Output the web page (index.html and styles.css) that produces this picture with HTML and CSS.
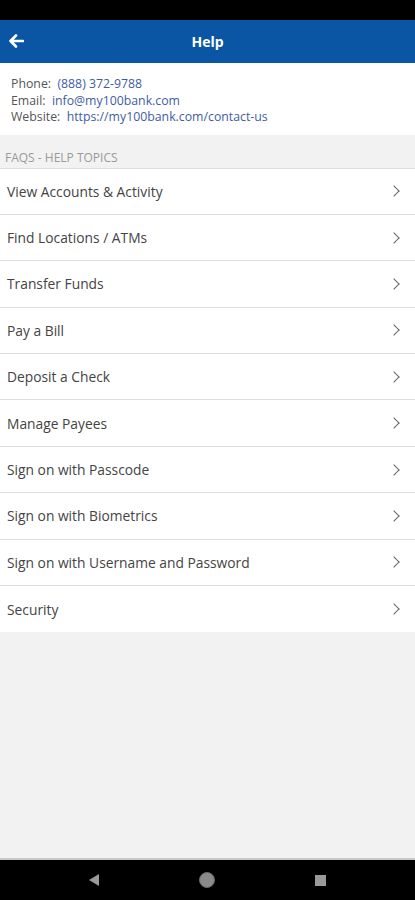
FILE: index.html
```html
<!DOCTYPE html>
<html lang="en">
<head>
    <meta charset="UTF-8">
    <meta name="viewport" content="width=device-width, initial-scale=1.0">
    <title>Help</title>
    <link rel="stylesheet" href="styles.css">
</head>
<body>

<div class="screen">
    <div class="status-bar"></div>

    <div class="app-bar">
        <span class="back">
            <svg width="16" height="14" viewBox="0 0 16 14">
                <path d="M15 7H2.5M8 1.5L2.5 7L8 12.5" fill="none" stroke="#fff" stroke-width="2.6" stroke-linecap="round" stroke-linejoin="round"/>
            </svg>
        </span>
        <span class="title">Help</span>
    </div>

    <div class="contact">
        <div>Phone:&nbsp; <a href="#">(888) 372-9788</a></div>
        <div>Email:&nbsp; <a href="#">info@my100bank.com</a></div>
        <div>Website:&nbsp; <a href="#">https://my100bank.com/contact-us</a></div>
    </div>

    <div class="section-title">FAQS - HELP TOPICS</div>

    <ul class="topics">
        <li><span>View Accounts &amp; Activity</span><i class="chev"></i></li>
        <li><span>Find Locations / ATMs</span><i class="chev"></i></li>
        <li><span>Transfer Funds</span><i class="chev"></i></li>
        <li><span>Pay a Bill</span><i class="chev"></i></li>
        <li><span>Deposit a Check</span><i class="chev"></i></li>
        <li><span>Manage Payees</span><i class="chev"></i></li>
        <li><span>Sign on with Passcode</span><i class="chev"></i></li>
        <li><span>Sign on with Biometrics</span><i class="chev"></i></li>
        <li><span>Sign on with Username and Password</span><i class="chev"></i></li>
        <li><span>Security</span><i class="chev"></i></li>
    </ul>

    <div class="filler"></div>

    <div class="nav-bar">
        <span class="nav-back"></span>
        <span class="nav-home"></span>
        <span class="nav-recent"></span>
    </div>
</div>

</body>
</html>
```

FILE: styles.css
```css
body {
    margin: 0;
    font-family: "Open Sans", "Liberation Sans", sans-serif;
    background-color: #f2f2f2;
}

.screen {
    width: 415px;
    height: 900px;
    display: flex;
    flex-direction: column;
}

.status-bar {
    height: 20px;
    background-color: #000;
}

.app-bar {
    height: 43px;
    background-color: #0b56a4;
    display: flex;
    align-items: center;
    justify-content: center;
    position: relative;
}

.back {
    position: absolute;
    left: 8px;
    top: 14px;
    display: flex;
}

.title {
    color: #fff;
    font-weight: 700;
    font-size: 14px;
}

.contact {
    background-color: #fff;
    padding: 13px 11px 9px;
    font-size: 12.3px;
    line-height: 16.5px;
    color: #555;
}

.contact a {
    color: #3f5ca6;
    text-decoration: none;
}

.section-title {
    height: 34px;
    box-sizing: border-box;
    padding: 14px 5px 0;
    font-size: 12px;
    color: #9a9a9a;
    border-bottom: 1px solid #dedede;
}

.topics {
    list-style: none;
    margin: 0;
    padding: 0;
}

.topics li {
    height: 45.4px;
    border-bottom: 1px solid #dedede;
    background-color: #fff;
    display: flex;
    align-items: center;
    justify-content: space-between;
    padding: 0 17px 0 7px;
    font-size: 13.8px;
    color: #444;
}

.topics li:last-child {
    border-bottom: none;
    height: 46.4px;
}

.chev {
    width: 7px;
    height: 7px;
    border-right: 1.6px solid #666;
    border-top: 1.6px solid #666;
    transform: rotate(45deg);
}

.filler {
    flex: 1;
    border-bottom: 2px solid #c8c8c8;
}

.nav-bar {
    height: 40px;
    background-color: #000;
    display: flex;
    align-items: center;
    justify-content: center;
    gap: 100px;
}

.nav-back {
    width: 0;
    height: 0;
    border-top: 6px solid transparent;
    border-bottom: 6px solid transparent;
    border-right: 10px solid #9a9a9a;
}

.nav-home {
    width: 14px;
    height: 14px;
    border-radius: 50%;
    background-color: #8a8a8a;
    border: 1px solid #6a6a6a;
}

.nav-recent {
    width: 11px;
    height: 11px;
    background-color: #9a9a9a;
}
```
